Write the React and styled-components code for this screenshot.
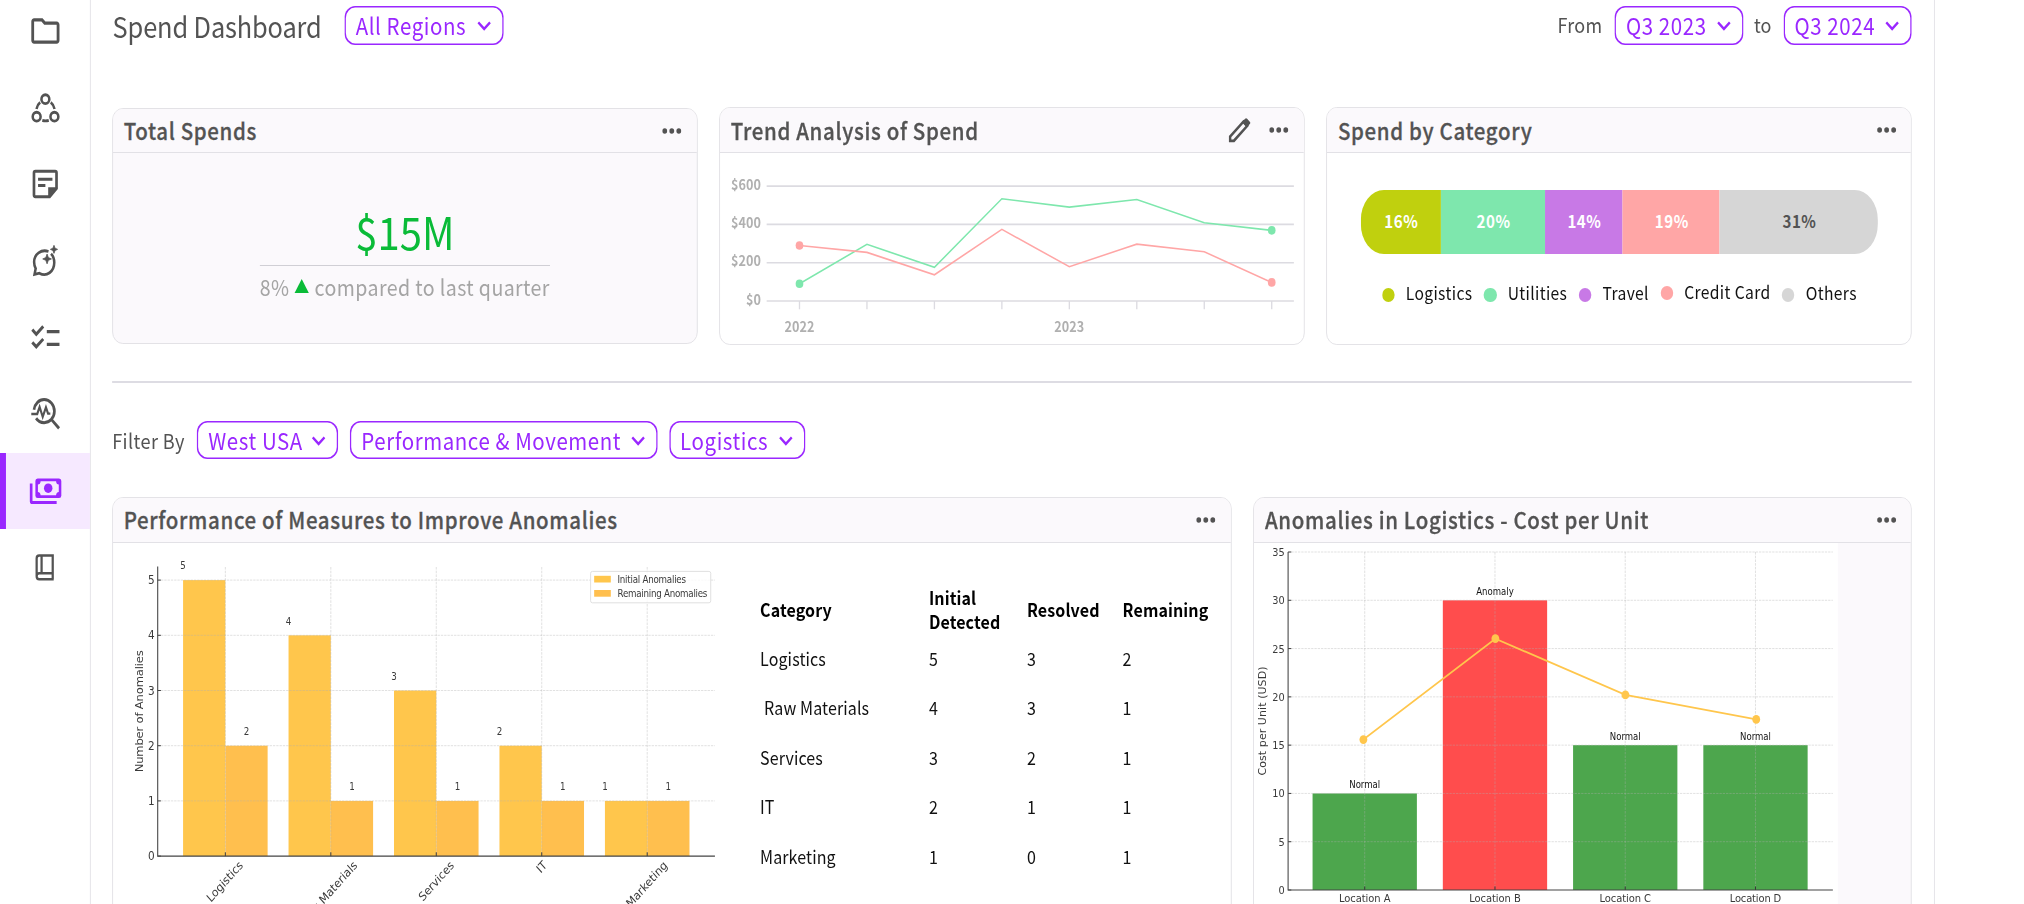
import React from "react"
import styled, { createGlobalStyle } from "styled-components"
import { MdChecklist, MdOutlineFolder } from "react-icons/md"

const GREY = "#535353"
const PURPLE = "#9a27ff"
const BORDER = "#e2e1e6"
const PANEL = "#fbf9fc"

const categories = [
  { name: "Logistics", share: 16, width: 90.1, color: "#c0d00e" },
  { name: "Utilities", share: 20, width: 117, color: "#7ee7ad" },
  { name: "Travel", share: 14, width: 87.3, color: "#c879e6" },
  { name: "Credit Card", share: 19, width: 109, color: "#ffa6a6", raised: true },
  { name: "Others", share: 31, width: 177.9, color: "#d6d6d6", dark: true },
]

const measures = [
  { name: "Logistics", initial: 5, resolved: 3, remaining: 2, labelX: 20.5 },
  { name: "Raw Materials", initial: 4, resolved: 3, remaining: 1, labelX: 30.5, indent: true },
  { name: "Services", initial: 3, resolved: 2, remaining: 1, labelX: 20.7 },
  { name: "IT", initial: 2, resolved: 1, remaining: 1, labelX: 6.5 },
  { name: "Marketing", initial: 1, resolved: 0, remaining: 1, labelX: 23.4 },
]

const locations = [
  { name: "Location A", cost: 10, status: "Normal" },
  { name: "Location B", cost: 30, status: "Anomaly" },
  { name: "Location C", cost: 15, status: "Normal" },
  { name: "Location D", cost: 15, status: "Normal" },
]

const trend = [
  { color: "#7ee7ad", values: [90, 296, 176, 534, 490, 530, 409, 369] },
  { color: "#ffa6a6", values: [290, 254, 137, 374, 179, 297, 257, 97] },
]

/* ---------- icons ---------- */

const ShareIcon = () => (
  <LineIcon viewBox="0 0 24 24" $stroke={1.8}>
    <circle cx="12" cy="6.4" r="2.8" />
    <circle cx="5.8" cy="17.5" r="2.8" />
    <circle cx="18.4" cy="17.5" r="2.8" />
    <path d="M8.3 8.5Q6.2 10 5.7 12.6M15.8 8.5Q17.9 10 18.5 12.6M9.8 19.8Q12.1 20.4 14.4 19.8" />
  </LineIcon>
)

const NoteIcon = () => (
  <LineIcon viewBox="0 0 24 24" $stroke={1.9}>
    <path d="M4.9 4h14c.6 0 1 .4 1 1v9.8L15 20H4.9c-.6 0-1-.4-1-1V5c0-.6.4-1 1-1z" />
    <path d="M6.8 9h10.2M6.8 13h5.2" />
    <path d="M14 14h6.5L14 20.8z" fill="currentColor" stroke="none" />
  </LineIcon>
)

const ChatIcon = () => (
  <LineIcon viewBox="0 0 24 24" $stroke={1.8}>
    <path d="M14.2 6C9 4.4 4 7.7 4 12.7c0 1.6.5 3 1.1 4l-.8 3.7 3.4-.7c5.3 2.5 10.6-1 10.6-6.7 0-2.3-.9-4.3-2.3-5.6" />
    <path
      d="M13.2 7.6l.9 2.2 2.2.9-2.2.9-.9 2.2-.9-2.2-2.2-.9 2.2-.9zM18.1 2.1l.75 1.8 1.8.75-1.8.75-.75 1.8-.75-1.8-1.8-.75 1.8-.75z"
      fill="currentColor"
      strokeWidth="0.5"
    />
  </LineIcon>
)

const InsightIcon = () => (
  <LineIcon viewBox="0 0 24 24" $stroke={1.9}>
    <path d="M3.9 9.3C4.3 5.7 7.4 2.9 11.1 2.9c4 0 7.3 3.3 7.3 7.3s-3.3 7.3-7.3 7.3c-2.3 0-4.4-1.1-5.7-2.8" />
    <path d="M16.3 15.5l5.4 5.6" />
    <path d="M2 12h4.2l1.7-4.5 2.2 6.3 2.3-6 1.5 4h1.6" strokeWidth="1.5" />
  </LineIcon>
)

const MoneyIcon = () => (
  <LineIcon viewBox="0 0 24 24" $stroke={1.9}>
    <path d="M1.9 7.2v11.2c0 .5.4.9.9.9h17.2" />
    <rect x="4.9" y="4.1" width="18.4" height="12.3" rx="1.6" fill="currentColor" stroke="none" />
    <path
      d="M8.6 5.8h11c0 1.2.8 2.1 1.9 2.1v4.7c-1.1 0-1.9.9-1.9 2.1h-11c0-1.2-.8-2.1-1.9-2.1V7.9c1.1 0 1.9-.9 1.9-2.1z"
      fill="#f6e9ff"
      stroke="none"
    />
    <circle cx="14" cy="10.2" r="3" fill="currentColor" stroke="none" />
  </LineIcon>
)

const BookIcon = () => (
  <LineIcon viewBox="0 0 24 24" $stroke={1.6}>
    <path d="M17.2 15.9H7.6c-1 0-1.8.8-1.8 1.9s.8 1.9 1.8 1.9h10.3M17.2 19.5v-14.7H7.6c-1 0-1.8.8-1.8 1.8v11.2M9.3 4.8v11" />
  </LineIcon>
)

const PencilIcon = () => (
  <LineIcon viewBox="0 0 24 24" $size={31} $stroke={2.1}>
    <path d="M4 20v-3.3L15.6 5.1l3.3 3.3L7.3 20z" />
    <path d="M14.3 5.6l2.7-2.7c.6-.6 1.2-.6 1.8 0l2.3 2.3c.6.6.6 1.2 0 1.8l-2.7 2.7z" fill="currentColor" stroke="none" />
  </LineIcon>
)

const Dots = () => (
  <DotsSvg width="22" height="6" viewBox="0 0 22 6">
    <circle cx="2.9" cy="3" r="2.7" />
    <circle cx="10.8" cy="3" r="2.7" />
    <circle cx="18.7" cy="3" r="2.7" />
  </DotsSvg>
)

const navIcons = [
  <MdOutlineFolder size={38} />,
  <ShareIcon />,
  <NoteIcon />,
  <ChatIcon />,
  <MdChecklist size={38} />,
  <InsightIcon />,
  <MoneyIcon />,
  <BookIcon />,
]

/* ---------- pieces ---------- */

const Select = ({ children, width }) => (
  <Pill $width={width}>
    {children}
    <Chevron width="16" height="10" viewBox="0 0 16 10">
      <path d="M1.4 1.4L8 8l6.6-6.6" />
    </Chevron>
  </Pill>
)

const Card = ({ title, editable, tinted, width, short, children }) => (
  <CardBox $tinted={tinted} $width={width} $short={short}>
    <CardHeader $short={short}>
      <CardTitle>{title}</CardTitle>
      <Actions>
        {editable && <PencilIcon />}
        <Dots />
      </Actions>
    </CardHeader>
    {children}
  </CardBox>
)

const TrendChart = () => {
  const x = i => 89.3 + i * 75.8
  const y = v => 148 - (v / 200) * 38.3

  return (
    <Chart width="655" height="190">
      {[600, 400, 200, 0].map(v => (
        <g key={v}>
          <line x1="52.4" x2="644.8" y1={y(v)} y2={y(v)} stroke="#dcdbe1" strokeWidth="1.6" />
          <TrendLabel x="46.2" y={y(v) + 3.7} textAnchor="end">
            ${v}
          </TrendLabel>
        </g>
      ))}
      {trend[0].values.map((_, i) => (
        <line key={i} x1={x(i)} x2={x(i)} y1="148" y2="156.3" stroke="#dcdbe1" strokeWidth="1.5" />
      ))}
      {trend.map(({ color, values }) => (
        <g key={color}>
          <polyline
            points={values.map((v, i) => `${x(i)},${y(v)}`).join(" ")}
            fill="none"
            stroke={color}
            strokeWidth="1.6"
          />
          <circle cx={x(0)} cy={y(values[0])} r="4.3" fill={color} />
          <circle cx={x(7)} cy={y(values[7])} r="4.3" fill={color} />
        </g>
      ))}
      <TrendLabel x={x(0)} y="178.6" textAnchor="middle">2022</TrendLabel>
      <TrendLabel x={x(4)} y="178.6" textAnchor="middle">2023</TrendLabel>
    </Chart>
  )
}

const MeasuresChart = () => {
  const x = i => 126.2 + i * 118.5
  const y = v => 313.1 - v * 55.2
  const bar = 47.5

  return (
    <Chart width="690" height="380">
      {measures.map(({ name, initial, remaining, labelX }, i) => (
        <g key={name}>
          <rect x={x(i) - bar} y={y(initial)} width={bar} height={initial * 55.2} fill="#ffc64c" />
          <rect x={x(i)} y={y(remaining)} width={bar} height={remaining * 55.2} fill="#ffbf4e" />
          <PlotText $size={9.8} x={x(i) - bar} y={y(initial) - 10.6} textAnchor="middle">
            {initial}
          </PlotText>
          <PlotText $size={9.8} x={x(i) + bar / 2} y={y(remaining) - 10.6} textAnchor="middle">
            {remaining}
          </PlotText>
          <PlotText
            $size={12}
            textAnchor="end"
            transform={`translate(${x(i) + labelX} 323) rotate(-45)`}
          >
            {name}
          </PlotText>
          <GridLine x1={x(i)} x2={x(i)} y1="24" y2="313.1" />
          <Tick x1={x(i)} x2={x(i)} y1="309.3" y2="313.1" />
        </g>
      ))}
      {[0, 1, 2, 3, 4, 5].map(v => (
        <g key={v}>
          {v > 0 && <GridLine x1="50.2" x2="676.3" y1={y(v)} y2={y(v)} />}
          <Tick x1="50.2" x2="53.8" y1={y(v)} y2={y(v)} />
          <PlotText $size={11.8} x="46.8" y={y(v) + 4.2} textAnchor="end">
            {v}
          </PlotText>
        </g>
      ))}
      <Axis d="M50.2 23.5V313.1H676.3" />
      <PlotText
        $size={11.6}
        textAnchor="middle"
        textLength="122"
        transform="translate(33.8 168.3) rotate(-90)"
      >
        Number of Anomalies
      </PlotText>
      <rect x="536.6" y="28.4" width="135" height="31.4" rx="2" fill="#fff" fillOpacity="0.8" stroke="#dedede" />
      <rect x="540.6" y="32.8" width="18.7" height="6.7" fill="#ffc64c" />
      <rect x="540.6" y="47" width="18.7" height="6.7" fill="#ffbf4e" />
      <PlotText $size={9.8} x="566.8" y="39.8" textLength="77">Initial Anomalies</PlotText>
      <PlotText $size={9.8} x="566.8" y="54.1" textLength="101">Remaining Anomalies</PlotText>
    </Chart>
  )
}

const CostChart = () => {
  const x = i => 124.4 + i * 146.35
  const y = v => 347 - v * 9.657
  const line = [[122.9, 196.6], [271.2, 95.7], [417.3, 151.8], [564.3, 176.4]]

  return (
    <PlotPanel>
      <Chart width="655" height="380">
        {locations.map(({ name, cost, status }, i) => (
          <g key={name}>
            <rect
              x={x(i) - 58.6}
              y={y(cost)}
              width="117.2"
              height={cost * 9.657}
              fill={status === "Normal" ? "#4da64d" : "#ff4d4d"}
            />
            <GridLine x1={x(i)} x2={x(i)} y1={y(35)} y2="347" />
            <Tick x1={x(i)} x2={x(i)} y1="343.4" y2="347" />
            <PlotText $size={9.6} $dark x={x(i)} y={y(cost) - 5.1} textAnchor="middle">
              {status}
            </PlotText>
            <PlotText $size={11.2} x={x(i)} y="359.2" textAnchor="middle" textLength="58">
              {name}
            </PlotText>
          </g>
        ))}
        {[0, 5, 10, 15, 20, 25, 30, 35].map(v => (
          <g key={v}>
            {v > 0 && <GridLine x1="38.3" x2="650.4" y1={y(v)} y2={y(v)} />}
            <Tick x1="38.3" x2="41.9" y1={y(v)} y2={y(v)} />
            <PlotText $size={11} x="34.6" y={y(v) + 4} textAnchor="end">
              {v}
            </PlotText>
          </g>
        ))}
        <Axis d={`M38.3 ${y(35)}V347H650.4`} />
        <polyline points={line.join(" ")} fill="none" stroke="#ffc64c" strokeWidth="1.8" />
        {line.map(([cx, cy]) => (
          <circle key={cx} cx={cx} cy={cy} r="4.4" fill="#ffc64c" />
        ))}
        <PlotText
          $size={11}
          textAnchor="middle"
          textLength="109"
          transform="translate(14 178) rotate(-90)"
        >
          Cost per Unit (USD)
        </PlotText>
      </Chart>
    </PlotPanel>
  )
}

const App = () => (
  <Viewport>
    <GlobalStyle />
    <Screen>
      <Sidebar>
        {navIcons.map((icon, i) => (
          <NavItem key={i} $active={i === 6}>
            {icon}
          </NavItem>
        ))}
      </Sidebar>

      <Main>
        <TopBar>
          <PageTitle>Spend Dashboard</PageTitle>
          <Select width={178.6}>All Regions</Select>
          <Period>
            <Label>From</Label>
            <Select width={144.3}>Q3 2023</Select>
            <Label $tight>to</Label>
            <Select width={144.3}>Q3 2024</Select>
          </Period>
        </TopBar>

        <Summary>
          <Card title="Total Spends" tinted short>
            <Total>
              <Amount>$15M</Amount>
              <Change>
                8%
                <Rise />
                <span>compared to last quarter</span>
              </Change>
            </Total>
          </Card>

          <Card title="Trend Analysis of Spend" editable>
            <TrendChart />
          </Card>

          <Card title="Spend by Category">
            <ShareBar>
              {categories.map(({ name, share, width, color, dark }) => (
                <Share key={name} $width={width} $color={color} $dark={dark}>
                  {share}%
                </Share>
              ))}
            </ShareBar>
            <Legend>
              {categories.map(({ name, color, raised }) => (
                <LegendItem key={name} $color={color} $raised={raised}>
                  {name}
                </LegendItem>
              ))}
            </Legend>
          </Card>
        </Summary>

        <Divider />

        <Filters>
          <FilterLabel>Filter By</FilterLabel>
          <Select width={159}>West USA</Select>
          <Select width={345.4}>Performance &amp; Movement</Select>
          <Select width={153}>Logistics</Select>
        </Filters>

        <Details>
          <Card title="Performance of Measures to Improve Anomalies" width={1257.7}>
            <Measures>
              <MeasuresChart />
              <Table>
                <thead>
                  <tr>
                    <Th $width={189.7}>Category</Th>
                    <Th $width={110.2}>
                      Initial
                      <br />
                      Detected
                    </Th>
                    <Th $width={107.5}>Resolved</Th>
                    <Th $width={100}>Remaining</Th>
                  </tr>
                </thead>
                <tbody>
                  {measures.map(({ name, initial, resolved, remaining, indent }) => (
                    <tr key={name}>
                      <Td $indent={indent}>{name}</Td>
                      <Td>{initial}</Td>
                      <Td>{resolved}</Td>
                      <Td>{remaining}</Td>
                    </tr>
                  ))}
                </tbody>
              </Table>
            </Measures>
          </Card>

          <Card title="Anomalies in Logistics - Cost per Unit" width={739.7} tinted>
            <CostChart />
          </Card>
        </Details>
      </Main>
    </Screen>
  </Viewport>
)

export default App

const GlobalStyle = createGlobalStyle`
  body {
    margin: 0;
    background: #fff;
    font-family: "Noto Sans CJK SC", "Noto Sans", sans-serif;
    color: ${GREY};
  }
  * {
    box-sizing: border-box;
  }
`

const Viewport = styled.div`
  width: 100vw;
  height: 904px;
  overflow: hidden;
`

// The interface is laid out wide and condensed horizontally.
const Screen = styled.div`
  display: flex;
  width: calc(100% / 0.89);
  height: 904px;
  transform: scaleX(0.89);
  transform-origin: 0 0;
`

const Sidebar = styled.nav`
  flex: none;
  width: 102px;
  height: 920px;
  margin-top: -7px;
  border-right: 1px solid ${BORDER};
`

const NavItem = styled.a`
  display: flex;
  align-items: center;
  justify-content: center;
  height: 76.6px;
  color: ${props => (props.$active ? PURPLE : GREY)};
  background: ${props => (props.$active ? "#f6e9ff" : "transparent")};
  box-shadow: ${props => (props.$active ? `inset 6.7px 0 ${PURPLE}` : "none")};
`

const LineIcon = styled.svg`
  width: ${props => props.$size || 38}px;
  height: ${props => props.$size || 38}px;
  fill: none;
  stroke: currentColor;
  stroke-width: ${props => props.$stroke};
`

const DotsSvg = styled.svg`
  fill: ${GREY};
`

const Chevron = styled.svg`
  margin-top: 1.5px;
  fill: none;
  stroke: currentColor;
  stroke-width: 2.6;
`

const Main = styled.main`
  flex: none;
  width: 2072px;
  height: 904px;
  overflow: hidden;
  padding: 6.4px 25px 0 24px;
  border-right: 1px solid ${BORDER};
`

const TopBar = styled.header`
  display: flex;
  align-items: center;
  height: 38.4px;
`

const PageTitle = styled.h1`
  width: 261px;
  margin: 0;
  padding: 0.6px 0 0 0.5px;
  font-size: 28.5px;
  font-weight: 400;
  line-height: 1;
  letter-spacing: -0.15px;
  white-space: nowrap;
`

const Pill = styled.button`
  display: flex;
  flex: none;
  align-items: center;
  justify-content: space-between;
  width: ${props => props.$width}px;
  height: 38.4px;
  padding: 0 14px 0 12.6px;
  font-family: inherit;
  font-size: 23px;
  line-height: 1;
  letter-spacing: 0.65px;
  white-space: nowrap;
  color: ${PURPLE};
  background: #fff;
  border: 0;
  border-radius: 12px;
  box-shadow: inset 0 0 0 1.6px ${PURPLE};
`

const Period = styled.div`
  display: flex;
  align-items: center;
  margin-left: auto;
`

const Label = styled.span`
  margin: ${props => (props.$tight ? "0 13px 0 12px" : "0 14px")};
  font-size: 20.2px;
  line-height: 1;
  letter-spacing: 0.25px;
`

const Summary = styled.section`
  display: grid;
  grid-template-columns: repeat(3, 1fr);
  gap: 24.5px;
  height: 238px;
  margin-top: 62.3px;
`

const CardBox = styled.article`
  width: ${props => (props.$width ? `${props.$width}px` : "auto")};
  margin: ${props => (props.$short ? "1px 0" : 0)};
  overflow: hidden;
  background: ${props => (props.$tinted ? PANEL : "#fff")};
  border: 1px solid ${BORDER};
  border-radius: 12px;
`

const CardHeader = styled.header`
  display: flex;
  align-items: center;
  justify-content: space-between;
  height: ${props => (props.$short ? 44 : 45)}px;
  padding: 0 16.5px 0 12px;
  background: ${PANEL};
  border-bottom: 1px solid ${BORDER};
`

const CardTitle = styled.h2`
  margin: 0;
  font-size: 23px;
  font-weight: 500;
  line-height: 1;
  letter-spacing: 0.73px;
  white-space: nowrap;
  -webkit-text-stroke: 0.3px ${GREY};
`

const Actions = styled.div`
  display: flex;
  align-items: center;
  gap: 18px;
`

const Chart = styled.svg`
  display: block;
  flex: none;
`

const TrendLabel = styled.text`
  font-size: 14.2px;
  font-weight: 700;
  letter-spacing: 0.1px;
  fill: #b0b0b0;
`

const PlotText = styled.text`
  font-family: "DejaVu Sans", sans-serif;
  font-size: ${props => props.$size}px;
  fill: ${props => (props.$dark ? "#111" : "#3a3a3a")};
`

const GridLine = styled.line`
  stroke: #b0b0b0;
  stroke-opacity: 0.4;
  stroke-width: 1;
  stroke-dasharray: 2.6 1.1;
`

const Tick = styled.line`
  stroke: #333;
  stroke-width: 1;
`

const Axis = styled.path`
  fill: none;
  stroke: #444;
  stroke-width: 1.2;
`

const Total = styled.div`
  width: 326px;
  margin: 0 auto;
  padding-top: 50px;
`

const Amount = styled.div`
  height: 63px;
  font-size: 45px;
  line-height: 56px;
  text-align: center;
  color: #0abb38;
  border-bottom: 1px solid #d0cfd5;
`

const Change = styled.div`
  display: flex;
  align-items: center;
  justify-content: space-between;
  margin-top: 4px;
  font-size: 22px;
  line-height: 32px;
  letter-spacing: 0.45px;
  white-space: nowrap;
  color: #a4a4a4;
`

const Rise = styled.i`
  border: solid transparent;
  border-width: 0 8px 14px;
  border-bottom-color: #0abb38;
`

const ShareBar = styled.div`
  display: flex;
  width: 581.3px;
  height: 64px;
  margin: 37px auto 0;
  overflow: hidden;
  border-radius: 26px / 30px;
`

const Share = styled.div`
  display: flex;
  align-items: center;
  justify-content: center;
  width: ${props => props.$width}px;
  padding: 0 0 3.4px 2px;
  font-size: 17px;
  font-weight: 700;
  line-height: 1;
  letter-spacing: 0.6px;
  color: ${props => (props.$dark ? GREY : "#fff")};
  background: ${props => props.$color};
`

const Legend = styled.div`
  display: flex;
  justify-content: center;
  gap: 13px;
  margin: 27.4px 0 0 1px;
`

const LegendItem = styled.span`
  display: flex;
  align-items: center;
  gap: 12.4px;
  margin-top: ${props => (props.$raised ? "-1.6px" : 0)};
  height: 24px;
  font-size: 17.6px;
  line-height: 24px;
  letter-spacing: 0.4px;
  white-space: nowrap;
  color: #111;

  &::before {
    content: "";
    width: 14.2px;
    height: 14.2px;
    margin-top: 3px;
    border-radius: 50%;
    background: ${props => props.$color};
  }
`

const Divider = styled.hr`
  height: 2px;
  margin: 36.4px 0 0;
  border: 0;
  background: #dddce3;
`

const Filters = styled.div`
  display: flex;
  align-items: center;
  gap: 12.9px;
  margin-top: 37.4px;
`

const FilterLabel = styled.span`
  width: 82.5px;
  font-size: 20.4px;
  line-height: 1;
  letter-spacing: 0.45px;
  white-space: nowrap;
`

const Details = styled.section`
  display: flex;
  justify-content: space-between;
  height: 480px;
  margin-top: 37.4px;
`

const Measures = styled.div`
  display: flex;
`

const Table = styled.table`
  align-self: flex-start;
  width: 507.4px;
  margin: 42px 0 0 37px;
  table-layout: fixed;
  border-collapse: collapse;
  font-size: 18px;
  line-height: 24px;
  letter-spacing: 0.12px;
  white-space: nowrap;
  color: #111;
`

const Th = styled.th`
  width: ${props => props.$width}px;
  height: 48.5px;
  padding: 0;
  font-weight: 700;
  text-align: left;
  color: #000;
`

const Td = styled.td`
  height: 49.5px;
  padding: 0 0 0 ${props => (props.$indent ? 4.5 : 0)}px;
`

const PlotPanel = styled.div`
  width: 655.6px;
  height: 100%;
  background: #fff;
`
